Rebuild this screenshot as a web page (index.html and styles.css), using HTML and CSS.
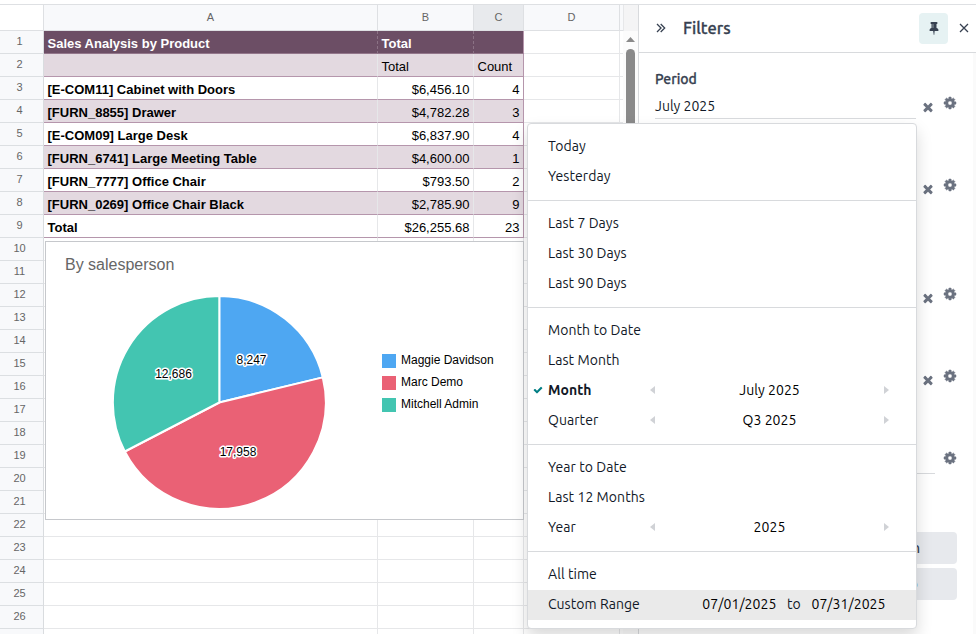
FILE: index.html
```html
<!DOCTYPE html>
<html lang="en">
<head>
    <meta charset="UTF-8">
    <meta name="viewport" content="width=device-width, initial-scale=1.0">
    <title>Sales Analysis by Product</title>
    <link rel="stylesheet" href="styles.css">
</head>
<body>
    <svg class="defs" width="0" height="0">
        <symbol id="cog" viewBox="0 0 1792 1792"><path d="M1152 896q0-106-75-181t-181-75-181 75-75 181 75 181 181 75 181-75 75-181zm512-109v222q0 12-8 23t-20 13l-185 28q-19 54-39 91 35 50 107 138 10 12 10 25t-9 23q-27 37-99 108t-94 71q-12 0-26-9l-138-108q-44 23-91 38-16 136-29 186-7 28-36 28h-222q-14 0-24.500-8.500t-11.500-21.500l-28-184q-49-16-90-37l-141 107q-10 9-25 9-14 0-25-11-126-114-165-168-7-10-7-23 0-12 8-23 15-21 51-66.500t54-70.500q-27-50-41-99l-183-27q-13-2-21-12.500t-8-23.500v-222q0-12 8-23t19-13l186-28q14-46 39-92-40-57-107-138-10-12-10-24 0-10 9-23 26-36 98.500-107.500t94.500-71.500q13 0 26 10l138 107q44-23 91-38 16-136 29-186 7-28 36-28h222q14 0 24.500 8.500t11.500 21.500l28 184q49 16 90 37l142-107q9-9 24-9 13 0 25 10 129 119 165 170 7 8 7 22 0 12-8 23-15 21-51 66.500t-54 70.500q26 50 41 98l183 28q13 2 21 12.500t8 23.500z"/></symbol>
        <symbol id="times" viewBox="0 0 1792 1792"><path d="M1490 1322q0 40-28 68l-136 136q-28 28-68 28t-68-28l-294-294-294 294q-28 28-68 28t-68-28l-136-136q-28-28-28-68t28-68l294-294-294-294q-28-28-28-68t28-68l136-136q28-28 68-28t68 28l294 294 294-294q28-28 68-28t68 28l136 136q28 28 28 68t-28 68l-294 294 294 294q28 28 28 68z"/></symbol>
        <symbol id="left" viewBox="0 0 5 8"><path d="M5 0v8L0 4z"/></symbol>
        <symbol id="right" viewBox="0 0 5 8"><path d="M0 0v8L5 4z"/></symbol>
    </svg>

    <div class="app">
        <div class="sheet">
            <div class="row head"><span class="num"></span><span class="a">A</span><span class="b">B</span><span class="c active">C</span><span class="d">D</span></div>
            <div class="row title"><span class="num">1</span><span class="a">Sales Analysis by Product</span><span class="b">Total</span><span class="c"></span><span class="d"></span></div>
            <div class="row data tint sub"><span class="num">2</span><span class="a"></span><span class="b">Total</span><span class="c">Count</span><span class="d"></span></div>
            <div class="row data"><span class="num">3</span><span class="a">[E-COM11] Cabinet with Doors</span><span class="b">$6,456.10</span><span class="c">4</span><span class="d"></span></div>
            <div class="row data tint"><span class="num">4</span><span class="a">[FURN_8855] Drawer</span><span class="b">$4,782.28</span><span class="c">3</span><span class="d"></span></div>
            <div class="row data"><span class="num">5</span><span class="a">[E-COM09] Large Desk</span><span class="b">$6,837.90</span><span class="c">4</span><span class="d"></span></div>
            <div class="row data tint"><span class="num">6</span><span class="a">[FURN_6741] Large Meeting Table</span><span class="b">$4,600.00</span><span class="c">1</span><span class="d"></span></div>
            <div class="row data"><span class="num">7</span><span class="a">[FURN_7777] Office Chair</span><span class="b">$793.50</span><span class="c">2</span><span class="d"></span></div>
            <div class="row data tint"><span class="num">8</span><span class="a">[FURN_0269] Office Chair Black</span><span class="b">$2,785.90</span><span class="c">9</span><span class="d"></span></div>
            <div class="row data"><span class="num">9</span><span class="a">Total</span><span class="b">$26,255.68</span><span class="c">23</span><span class="d"></span></div>
            <div class="row"><span class="num">10</span><span class="a"></span><span class="b"></span><span class="c"></span><span class="d"></span></div>
            <div class="row"><span class="num">11</span><span class="a"></span><span class="b"></span><span class="c"></span><span class="d"></span></div>
            <div class="row"><span class="num">12</span><span class="a"></span><span class="b"></span><span class="c"></span><span class="d"></span></div>
            <div class="row"><span class="num">13</span><span class="a"></span><span class="b"></span><span class="c"></span><span class="d"></span></div>
            <div class="row"><span class="num">14</span><span class="a"></span><span class="b"></span><span class="c"></span><span class="d"></span></div>
            <div class="row"><span class="num">15</span><span class="a"></span><span class="b"></span><span class="c"></span><span class="d"></span></div>
            <div class="row"><span class="num">16</span><span class="a"></span><span class="b"></span><span class="c"></span><span class="d"></span></div>
            <div class="row"><span class="num">17</span><span class="a"></span><span class="b"></span><span class="c"></span><span class="d"></span></div>
            <div class="row"><span class="num">18</span><span class="a"></span><span class="b"></span><span class="c"></span><span class="d"></span></div>
            <div class="row"><span class="num">19</span><span class="a"></span><span class="b"></span><span class="c"></span><span class="d"></span></div>
            <div class="row"><span class="num">20</span><span class="a"></span><span class="b"></span><span class="c"></span><span class="d"></span></div>
            <div class="row"><span class="num">21</span><span class="a"></span><span class="b"></span><span class="c"></span><span class="d"></span></div>
            <div class="row"><span class="num">22</span><span class="a"></span><span class="b"></span><span class="c"></span><span class="d"></span></div>
            <div class="row"><span class="num">23</span><span class="a"></span><span class="b"></span><span class="c"></span><span class="d"></span></div>
            <div class="row"><span class="num">24</span><span class="a"></span><span class="b"></span><span class="c"></span><span class="d"></span></div>
            <div class="row"><span class="num">25</span><span class="a"></span><span class="b"></span><span class="c"></span><span class="d"></span></div>
            <div class="row"><span class="num">26</span><span class="a"></span><span class="b"></span><span class="c"></span><span class="d"></span></div>
            <div class="row"><span class="num"></span><span class="a"></span><span class="b"></span><span class="c"></span><span class="d"></span></div>

            <!-- chart floats over the cells -->
            <div class="chart">
                <h2>By salesperson</h2>
                <div class="chart-body">
                    <svg class="pie" width="216" height="216" viewBox="-108 -108 216 216">
                        <g stroke="#fff" stroke-width="2" stroke-linejoin="round">
                            <path fill="#4ea7f2" d="M0.300 -0.500V-107A106.500 106.500 0 0 1 103.800 -25.600Z"/>
                            <path fill="#ea6175" d="M0.300 -0.500L103.800 -25.600A106.500 106.500 0 0 1 -94.200 48.500Z"/>
                            <path fill="#43c5b1" d="M0.300 -0.500L-94.200 48.500A106.500 106.500 0 0 1 0.300 -107Z"/>
                        </g>
                        <g class="pie-labels">
                            <text x="32.500" y="-39">8,247</text>
                            <text x="-45.500" y="-25">12,686</text>
                            <text x="19" y="53">17,958</text>
                        </g>
                    </svg>
                    <ul class="legend">
                        <li><i class="blue"></i>Maggie Davidson</li>
                        <li><i class="red"></i>Marc Demo</li>
                        <li><i class="green"></i>Mitchell Admin</li>
                    </ul>
                </div>
            </div>
        </div>

        <div class="scrollbar">
            <div class="corner"></div>
            <svg width="9" height="5" viewBox="0 0 9 5"><path fill="#8a8a8a" d="M0 5L4.500 0L9 5z"/></svg>
            <div class="thumb"></div>
        </div>

        <aside class="panel">
            <header>
                <svg class="collapse" width="10" height="10" viewBox="0 0 10 10"><path d="M1 1l4 4-4 4M4.700 1l4 4-4 4"/></svg>
                <h1>Filters</h1>
                <button class="pin"><svg width="14" height="14" viewBox="-320 0 1792 1792"><path d="M480 864v-448q0-14-9-23t-23-9-23 9-9 23v448q0 14 9 23t23 9 23-9 9-23zm672 352q0 26-19 45t-45 19h-429l-51 483q-2 12-10.500 20.500t-20.500 8.500h-1q-27 0-32-27l-76-485h-404q-26 0-45-19t-19-45q0-123 78.500-221.500t177.500-98.500v-512q-52 0-90-38t-38-90 38-90 90-38h640q52 0 90 38t38 90-38 90-90 38v512q99 0 177.500 98.500t78.500 221.500z"/></svg></button>
                <svg class="close" width="10" height="10" viewBox="0 0 10 10"><path d="M1 1l8 8M9 1l-8 8"/></svg>
            </header>
            <div class="filter">
                <label>Period</label>
                <div class="control"><span class="value">July 2025</span><svg class="clear"><use href="#times"/></svg><svg class="cog"><use href="#cog"/></svg></div>
            </div>
            <div class="filter tall">
                <label></label>
                <div class="control"><span class="value"></span><svg class="clear"><use href="#times"/></svg><svg class="cog"><use href="#cog"/></svg></div>
            </div>
            <div class="filter">
                <label></label>
                <div class="control"><span class="value"></span><svg class="clear"><use href="#times"/></svg><svg class="cog"><use href="#cog"/></svg></div>
            </div>
            <div class="filter">
                <label></label>
                <div class="control"><span class="value"></span><svg class="clear"><use href="#times"/></svg><svg class="cog"><use href="#cog"/></svg></div>
            </div>
            <div class="filter last">
                <label></label>
                <div class="control"><span class="value"></span><svg class="cog"><use href="#cog"/></svg></div>
            </div>
            <div class="buttons">
                <button>n</button>
                <button>o</button>
            </div>
        </aside>
    </div>

    <div class="menu">
        <div class="group">
            <div class="item">Today</div>
            <div class="item">Yesterday</div>
        </div>
        <div class="group">
            <div class="item">Last 7 Days</div>
            <div class="item">Last 30 Days</div>
            <div class="item">Last 90 Days</div>
        </div>
        <div class="group">
            <div class="item">Month to Date</div>
            <div class="item">Last Month</div>
            <div class="item selected">
                <svg class="check" width="10" height="10" viewBox="0 0 1792 1792"><path d="M1671 566q0 40-28 68l-724 724-136 136q-28 28-68 28t-68-28l-136-136-362-362q-28-28-28-68t28-68l136-136q28-28 68-28t68 28l294 295 656-657q28-28 68-28t68 28l136 136q28 28 28 68z"/></svg>
                <b>Month</b>
                <div class="picker"><svg><use href="#left"/></svg><span>July 2025</span><svg><use href="#right"/></svg></div>
            </div>
            <div class="item">Quarter
                <div class="picker"><svg><use href="#left"/></svg><span>Q3 2025</span><svg><use href="#right"/></svg></div>
            </div>
        </div>
        <div class="group">
            <div class="item">Year to Date</div>
            <div class="item">Last 12 Months</div>
            <div class="item">Year
                <div class="picker"><svg><use href="#left"/></svg><span>2025</span><svg><use href="#right"/></svg></div>
            </div>
        </div>
        <div class="group">
            <div class="item">All time</div>
            <div class="item hover">Custom Range
                <div class="range"><span>07/01/2025</span><em>to</em><span>07/31/2025</span></div>
            </div>
        </div>
    </div>
</body>
</html>
```
FILE: styles.css
```css
* {
    box-sizing: border-box;
}
body {
    margin: 0;
    height: 634px;
    overflow: hidden;
    background: #fff;
    color: #1f2937;
    font: 14px/21px Ubuntu, "Noto Sans", sans-serif;
}
.defs {
    position: absolute;
}
.app {
    display: flex;
    height: 630px;
    margin-top: 4px;
    border-top: 1px solid #dee0e3;
    overflow: hidden;
}

/* spreadsheet */
.sheet {
    position: relative;
    width: 623px;
    flex: none;
    font: 13px/15px "Liberation Sans", Arial, sans-serif;
    color: #000;
}
.row {
    display: flex;
    height: 23px;
    border-bottom: 1px solid #e6e7e9;
}
.row span {
    height: 23px;
    padding: 5px 3.5px 0;
    border-right: 1px solid #e6e7e9;
    white-space: nowrap;
}
.row .num {
    width: 44px;
    padding: 3px 4px 0 0;
    background: #f8f9fb;
    border-right-color: #d9dcdf;
    border-bottom: 1px solid #dcdfe2;
    font-size: 11px;
    line-height: 14px;
    color: #666;
    text-align: center;
}
.a { width: 334px; }
.b { width: 96px; }
.c { width: 50px; }
.d { width: 96px; }
.row.head {
    height: 26px;
    border-bottom-color: #dee0e3;
    background: #f8f9fb;
}
.row.head span {
    height: 25px;
    padding: 5px 0 0;
    font-size: 11px;
    line-height: 15px;
    color: #666;
    text-align: center;
    border-right-color: #dee0e3;
}
.row.head .num {
    background: #fff;
    border-bottom: 0;
}
.row.head .active {
    background: #e8eaed;
}
.title .a, .title .b, .title .c {
    background: #6c4e65;
    border-right: 1px dashed #8b7285;
    border-bottom: 1px solid #93768b;
    color: #fff;
    font-weight: bold;
}
.data .a, .data .b, .data .c {
    border-bottom: 1px solid #b596ac;
}
.row.title .c, .row.data .c {
    border-right: 1px solid #b596ac;
}
.data .a {
    font-weight: bold;
}
.data .b, .data .c {
    text-align: right;
}
.row.sub .b, .row.sub .c {
    text-align: left;
}
.tint .a, .tint .b, .tint .c {
    background: #e3d9e0;
}

/* chart */
.chart {
    position: absolute;
    left: 45px;
    top: 236px;
    width: 479px;
    height: 279px;
    background: #fff;
    border: 1px solid #c6c8cc;
}
.chart h2 {
    margin: 12px 0 0 19px;
    font-size: 16px;
    line-height: 22px;
    font-weight: normal;
    color: #666;
}
.chart-body {
    display: flex;
    align-items: flex-start;
    padding: 19px 0 0 65px;
}
.pie {
    flex: none;
}
.pie-labels text {
    font-size: 12px;
    text-anchor: middle;
    fill: #000;
    stroke: #fff;
    stroke-width: 3px;
    stroke-linejoin: round;
    paint-order: stroke;
}
.legend {
    list-style: none;
    margin: 54px 0 0 55px;
    padding: 0;
    font-size: 12px;
    line-height: 22px;
}
.legend li {
    display: flex;
    height: 22px;
    white-space: nowrap;
}
.legend i {
    width: 14px;
    height: 14px;
    margin: 5px 5px 0 0;
}
.blue { background: #4ea7f2; }
.red { background: #ea6175; }
.green { background: #43c5b1; }

.scrollbar {
    width: 15px;
    flex: none;
    display: flex;
    flex-direction: column;
    align-items: center;
    background: #fcfcfc;
}
.corner {
    width: 15px;
    height: 26px;
    background: #f4f4f5;
    border-left: 1px solid #e6e7e9;
}
.scrollbar svg {
    margin-top: 6px;
}
.thumb {
    width: 9px;
    height: 300px;
    margin-top: 7px;
    border-radius: 5px;
    background: #8a8a8a;
}

/* filters panel */
.panel {
    flex: 1;
    border-left: 1px solid #d8dadd;
    box-shadow: inset -3px 0 #fafafa;
}
.panel header {
    display: flex;
    align-items: center;
    height: 48px;
    padding: 0 7px 1px 17px;
    background: #fff;
    border-bottom: 1px solid #d8dadd;
}
.panel h1 {
    flex: 1;
    margin: 1px 0 0 17px;
    font-size: 16.5px;
    font-weight: 500;
    color: #374151;
    -webkit-text-stroke: 0.3px #374151;
}
.collapse, .close {
    fill: none;
    stroke: #374151;
    stroke-width: 1.3;
}
.pin {
    display: flex;
    align-items: center;
    justify-content: center;
    width: 29px;
    height: 31px;
    margin-right: 11px;
    padding: 0;
    border: 0;
    border-radius: 4px;
    background: #e6f2f3;
    fill: #374151;
}
.filter {
    height: 82px;
    padding: 16px 19px 0 16px;
}
.filter.tall {
    height: 109px;
}
.filter.last {
    height: 124px;
}
.filter label {
    display: block;
    height: 24px;
    font-weight: 500;
    color: #374151;
    -webkit-text-stroke: 0.3px #374151;
}
.control {
    display: flex;
    height: 26px;
}
.value {
    flex: 1;
    padding-top: 3px;
    border-bottom: 1px solid #d8dadd;
    color: #111827;
}
.control svg {
    width: 14px;
    height: 14px;
    fill: #6b7280;
}
.clear {
    margin: 7px 0 0 5px;
}
.control .cog {
    margin: 3px 0 0 8px;
    stroke: #6b7280;
    stroke-width: 60px;
}
.buttons {
    display: flex;
    flex-direction: column;
    gap: 4px;
    padding: 0 19px 0 16px;
}
.buttons button {
    height: 32px;
    border: 0;
    border-radius: 4px;
    background: #e7e9ed;
    color: #374151;
    font: 500 14px Ubuntu, "Noto Sans", sans-serif;
    text-align: left;
    padding: 0 0 0 257px;
}
.buttons button + button {
    padding-left: 254.5px;
}

/* period dropdown */
.menu {
    position: absolute;
    left: 527px;
    top: 123px;
    width: 390px;
    height: 506px;
    background: #fff;
    border: 1px solid #d8dadd;
    border-radius: 4px;
    box-shadow: 0 8px 16px rgba(0, 0, 0, 0.15);
}
.group {
    padding: 8px 0;
}
.group + .group {
    border-top: 1px solid #d8dadd;
}
.item {
    position: relative;
    display: flex;
    align-items: center;
    height: 30px;
    padding: 0 27px 2px 20px;
    color: #111827;
    letter-spacing: 0.06px;
}
.hover {
    background: #eaeaea;
}
.check {
    position: absolute;
    left: 5px;
    top: 9px;
    fill: #017e84;
}
.picker {
    display: flex;
    align-items: center;
    justify-content: space-between;
    width: 239px;
    margin-left: auto;
    color: #000;
}
.picker svg {
    width: 5px;
    height: 8px;
    fill: #d0d2d6;
}
.range {
    display: flex;
    gap: 10.6px;
    margin-left: auto;
    padding-right: 3.5px;
    color: #000;
}
.range em {
    font-style: normal;
    color: #111827;
}
```
